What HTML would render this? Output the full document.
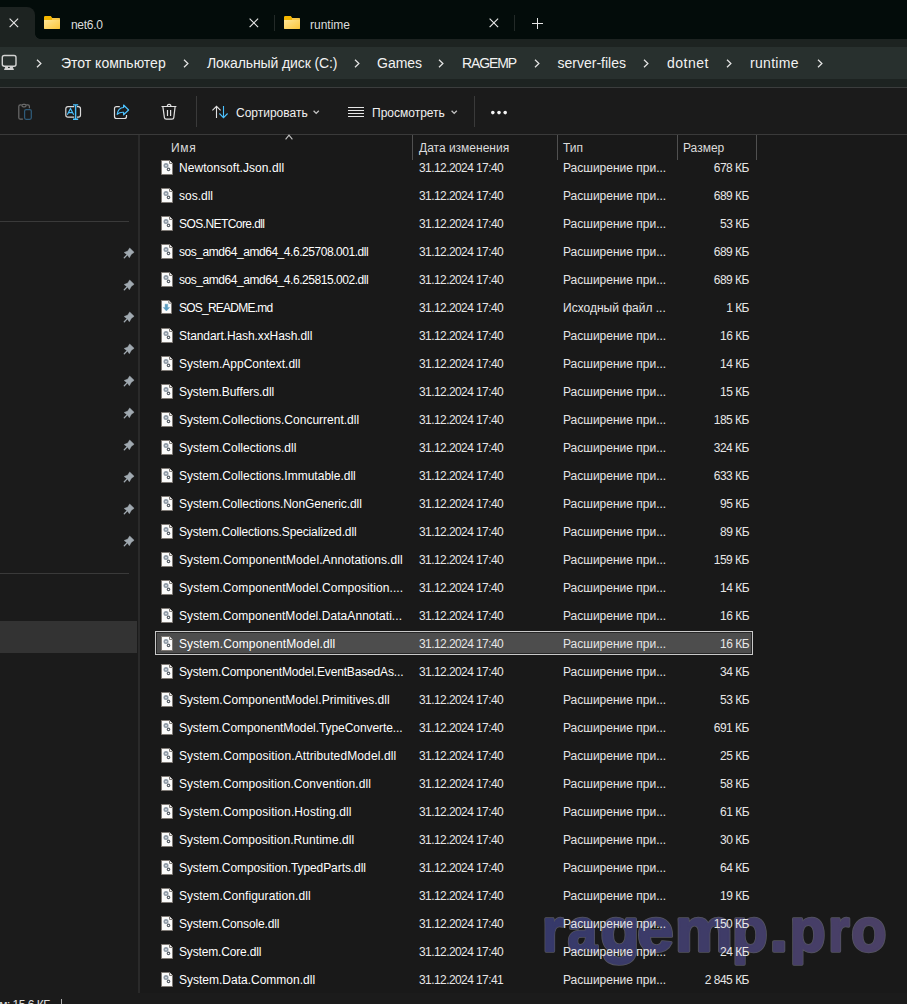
<!DOCTYPE html>
<html><head><meta charset="utf-8">
<style>
*{box-sizing:border-box}
html,body{margin:0;padding:0}
body{width:907px;height:1004px;overflow:hidden;position:relative;background:#191919;font-family:"Liberation Sans",sans-serif;color:#fff}
.a{position:absolute}
#tabbar{left:0;top:0;width:907px;height:39px;background:#030c0a}
#acttab{left:-20px;top:7px;width:55px;height:40px;background:#1d2321;border-radius:0 8px 0 0}
#flare{left:35px;top:34px;width:5px;height:5px;background:radial-gradient(circle at 100% 0,#030c0a 4.5px,#1d2321 5px)}
#strip1{left:0;top:39px;width:907px;height:8px;background:#1d2321}
#addr{left:0;top:47px;width:907px;height:32px;background:#28302e}
#strip2{left:0;top:79px;width:907px;height:8px;background:#1d2321}
#line1{left:0;top:87px;width:907px;height:1px;background:#3b3d3d}
#toolbar{left:0;top:88px;width:907px;height:46px;background:#1b1b1b}
#line2{left:0;top:134px;width:907px;height:1px;background:#3a3a3a}
#nav{left:0;top:135px;width:138px;height:858px;background:#1b1b1b}
#divider{left:138px;top:135px;width:2px;height:858px;background:#2a2a2a}
#status{left:0;top:993px;width:907px;height:11px;background:#1b1b1b}
.tabtxt{font-size:12px;color:#dcdcdc;top:16.5px;line-height:16px}
.x{stroke:#e6e6e6;stroke-width:1.15}
.crumb{font-size:14px;color:#f2f2f2;top:55px;line-height:16px;white-space:nowrap}
.tb{font-size:12px;color:#f0f0f0;top:105px;line-height:16px;white-space:nowrap}
.hdr{font-size:12px;color:#dcdcdc;top:141px;line-height:14px;white-space:nowrap}
.colsep{top:135px;width:1px;height:25px;background:#505050}
.row{position:absolute;left:155px;width:598px;height:28px}
.row .ic{position:absolute;left:6px;top:7px}
.row span{position:absolute;top:8px;font-size:12px;line-height:14px;white-space:nowrap;color:#ffffff}
.row .nm{left:24px}
.row .dt{left:264px;color:#e6e6e6;letter-spacing:-0.58px}
.row .tp{left:408px;color:#e6e6e6}
.row .sz{right:4px;color:#e6e6e6;letter-spacing:-0.5px}
.row.sel::before{content:"";box-sizing:border-box;position:absolute;left:0;top:2px;width:598px;height:24px;border:1px solid #c9c9c9;background:#4d4d4d;box-shadow:inset 0 0 0 1px #262626}
.pin{left:123px;width:12px;height:12px}
.navsep{left:0;width:129px;height:1px;background:#3a3a3a}
</style></head><body>
<svg width="0" height="0" style="position:absolute"><defs><linearGradient id="fg" x1="0" y1="0" x2="1" y2="1"><stop offset="0" stop-color="#ffe697"/><stop offset="1" stop-color="#fcc63a"/></linearGradient></defs></svg>
<div id="tabbar" class="a"></div>
<div id="acttab" class="a"></div>
<div id="flare" class="a"></div>
<svg class="a" style="left:9px;top:18px" width="10" height="10" viewBox="0 0 10 10"><path class="x" d="M0.6 0.6L9.1 9.1M9.1 0.6L0.6 9.1"/></svg>
<!-- tab net6.0 -->
<svg class="a" style="left:44px;top:16px" width="16" height="13" viewBox="0 0 16 13"><path d="M0 1.3Q0 0 1.3 0H6.8L8.3 2H14.7Q16 2 16 3.3V12Q16 13 15 13H1Q0 13 0 12Z" fill="#f3b600"/><path d="M8 2H14.7Q16 2 16 3.3V4H8Z" fill="#f8c848"/><path d="M0 4H16V12Q16 13 15 13H1Q0 13 0 12Z" fill="url(#fg)"/></svg>
<div class="a tabtxt" style="left:71px;letter-spacing:-0.3px">net6.0</div>
<svg class="a" style="left:249px;top:18px" width="10" height="10" viewBox="0 0 10 10"><path class="x" d="M0.6 0.6L9.1 9.1M9.1 0.6L0.6 9.1"/></svg>
<div class="a" style="left:274px;top:15px;width:1px;height:16px;background:#232a28"></div>
<!-- tab runtime -->
<svg class="a" style="left:284px;top:16px" width="16" height="13" viewBox="0 0 16 13"><path d="M0 1.3Q0 0 1.3 0H6.8L8.3 2H14.7Q16 2 16 3.3V12Q16 13 15 13H1Q0 13 0 12Z" fill="#f3b600"/><path d="M8 2H14.7Q16 2 16 3.3V4H8Z" fill="#f8c848"/><path d="M0 4H16V12Q16 13 15 13H1Q0 13 0 12Z" fill="url(#fg)"/></svg>
<div class="a tabtxt" style="left:310px">runtime</div>
<svg class="a" style="left:489px;top:18px" width="10" height="10" viewBox="0 0 10 10"><path class="x" d="M0.6 0.6L9.1 9.1M9.1 0.6L0.6 9.1"/></svg>
<div class="a" style="left:514px;top:15px;width:1px;height:16px;background:#232a28"></div>
<svg class="a" style="left:532px;top:18px" width="11" height="11" viewBox="0 0 11 11"><path d="M5.5 0V11M0 5.5H11" stroke="#e6e6e6" stroke-width="1"/></svg>

<div id="strip1" class="a"></div>
<div id="addr" class="a"></div>
<div id="strip2" class="a"></div>
<div id="line1" class="a"></div>
<!-- monitor icon -->
<svg class="a" style="left:0;top:50px" width="24" height="24" viewBox="0 0 24 24"><rect x="2.3" y="5.5" width="13.7" height="10.7" rx="2" fill="none" stroke="#d2d2d2" stroke-width="1.4"/><path d="M5.3 16.8H12.7L14 19.9H4Z" fill="#d2d2d2"/><rect x="8" y="16.9" width="1.8" height="1.1" fill="#28302e"/></svg>
<svg class="a" style="left:36px;top:58.6px" width="7" height="10" viewBox="0 0 7 10"><path d="M1 0.8L4.9 4.5L1 8.2" fill="none" stroke="#e4e4e4" stroke-width="1.25"/></svg>
<div class="a crumb" style="left:61px">Этот компьютер</div>
<svg class="a" style="left:183px;top:58.6px" width="7" height="10" viewBox="0 0 7 10"><path d="M1 0.8L4.9 4.5L1 8.2" fill="none" stroke="#e4e4e4" stroke-width="1.25"/></svg>
<div class="a crumb" style="left:207px;letter-spacing:-0.11px">Локальный диск (C:)</div>
<svg class="a" style="left:353.5px;top:58.6px" width="7" height="10" viewBox="0 0 7 10"><path d="M1 0.8L4.9 4.5L1 8.2" fill="none" stroke="#e4e4e4" stroke-width="1.25"/></svg>
<div class="a crumb" style="left:377px">Games</div>
<svg class="a" style="left:438px;top:58.6px" width="7" height="10" viewBox="0 0 7 10"><path d="M1 0.8L4.9 4.5L1 8.2" fill="none" stroke="#e4e4e4" stroke-width="1.25"/></svg>
<div class="a crumb" style="left:462px;letter-spacing:-1.1px">RAGEMP</div>
<svg class="a" style="left:533.7px;top:58.6px" width="7" height="10" viewBox="0 0 7 10"><path d="M1 0.8L4.9 4.5L1 8.2" fill="none" stroke="#e4e4e4" stroke-width="1.25"/></svg>
<div class="a crumb" style="left:557.5px">server-files</div>
<svg class="a" style="left:643.3px;top:58.6px" width="7" height="10" viewBox="0 0 7 10"><path d="M1 0.8L4.9 4.5L1 8.2" fill="none" stroke="#e4e4e4" stroke-width="1.25"/></svg>
<div class="a crumb" style="left:667px;letter-spacing:0.5px">dotnet</div>
<svg class="a" style="left:725.7px;top:58.6px" width="7" height="10" viewBox="0 0 7 10"><path d="M1 0.8L4.9 4.5L1 8.2" fill="none" stroke="#e4e4e4" stroke-width="1.25"/></svg>
<div class="a crumb" style="left:750px;letter-spacing:0.3px">runtime</div>
<svg class="a" style="left:816.8px;top:58.6px" width="7" height="10" viewBox="0 0 7 10"><path d="M1 0.8L4.9 4.5L1 8.2" fill="none" stroke="#e4e4e4" stroke-width="1.25"/></svg>

<div id="toolbar" class="a"></div>
<div id="line2" class="a"></div>

<svg class="a" style="left:12px;top:100px" width="26" height="24" viewBox="0 0 26 24"><path d="M10.9 19.2H8.3Q6.8 19.2 6.8 17.7V6.4Q6.8 4.9 8.3 4.9H9.6M14.3 4.9H15.9Q17.4 4.9 17.4 6.4V8.2" fill="none" stroke="#6b6b6b" stroke-width="1.2"/><rect x="9.9" y="4.4" width="4.2" height="2.4" rx="1.2" fill="none" stroke="#6b6b6b" stroke-width="1.2"/><rect x="12.6" y="9.6" width="6.7" height="9.7" rx="1.5" fill="none" stroke="#2f5b79" stroke-width="1.25"/></svg>
<svg class="a" style="left:60px;top:100px" width="26" height="24" viewBox="0 0 26 24"><path d="M14.2 6.6H8Q5.8 6.6 5.8 8.8V15Q5.8 17.2 8 17.2H14.2M16.9 6.6H18.3Q20.5 6.6 20.5 8.8V15Q20.5 17.2 18.3 17.2H16.9" fill="none" stroke="#dadada" stroke-width="1.2"/><path d="M15.6 4.8V19.3M13 4.9H18.2M13 19.2H18.2" fill="none" stroke="#4cc2ff" stroke-width="1.4"/><path d="M7.3 14.7L10.5 8.4L13.7 14.7M8.5 12.6H12.5" fill="none" stroke="#4cc2ff" stroke-width="1.15"/></svg>
<svg class="a" style="left:108px;top:98px" width="26" height="26" viewBox="0 0 26 26"><path d="M11.8 8.6H8.5Q6.5 8.6 6.5 10.6V18.5Q6.5 20.5 8.5 20.5H16.5Q18.5 20.5 18.5 18.5V17" fill="none" stroke="#dedede" stroke-width="1.2"/><path d="M9.2 16.4Q10 9.8 15.6 9.5V7L20.6 12L15.6 16.8V14.3Q11.6 14 9.2 16.4Z" fill="none" stroke="#4cc2ff" stroke-width="1.2" stroke-linejoin="round"/></svg>
<svg class="a" style="left:156px;top:98px" width="26" height="26" viewBox="0 0 26 26"><path d="M5.5 8.5H20.4M11.3 8.3Q11.3 6.3 13.1 6.3Q14.9 6.3 14.9 8.3M6.9 8.8L8.4 19.6Q8.6 21.2 10.2 21.2H16Q17.6 21.2 17.8 19.6L19.1 8.8M11.5 12V18M14.6 12V18" fill="none" stroke="#e2e2e2" stroke-width="1.2"/></svg>
<div class="a" style="left:196px;top:96px;width:1px;height:31px;background:#3a3a3a"></div>
<svg class="a" style="left:206px;top:100px" width="26" height="24" viewBox="0 0 26 24"><path d="M10.5 18V6.3M6.4 10.4L10.5 6.3L14.6 10.4" fill="none" stroke="#e2e2e2" stroke-width="1.1"/><path d="M17.5 6V17.6M13.4 13.5L17.5 17.6L21.6 13.5" fill="none" stroke="#4cc2ff" stroke-width="1.1"/></svg>
<div class="a tb" style="left:236px">Сортировать</div>
<svg class="a" style="left:313px;top:110px" width="7" height="5" viewBox="0 0 7 5"><path d="M0.6 0.7L3.2 3.4L5.8 0.7" fill="none" stroke="#c4c4c4" stroke-width="1.3"/></svg>
<svg class="a" style="left:348px;top:107px" width="16" height="10" viewBox="0 0 16 10"><path d="M0 0.5H16M0 3.5H16M0 6.5H16M0 9.5H16" fill="none" stroke="#e6e6e6" stroke-width="1"/></svg>
<div class="a tb" style="left:372px">Просмотреть</div>
<svg class="a" style="left:451px;top:110px" width="7" height="5" viewBox="0 0 7 5"><path d="M0.6 0.7L3.2 3.4L5.8 0.7" fill="none" stroke="#c4c4c4" stroke-width="1.3"/></svg>
<div class="a" style="left:474px;top:96px;width:1px;height:31px;background:#3a3a3a"></div>
<svg class="a" style="left:490px;top:110px" width="18" height="5" viewBox="0 0 18 5"><circle cx="2.8" cy="2.6" r="1.8" fill="#f4f4f4"/><circle cx="9" cy="2.6" r="1.8" fill="#f4f4f4"/><circle cx="15.2" cy="2.6" r="1.8" fill="#f4f4f4"/></svg>


<div id="nav" class="a"></div>
<div id="divider" class="a"></div>
<div class="a navsep" style="top:221px"></div>
<div class="a navsep" style="top:573px"></div>
<div class="a" style="left:0;top:621px;width:137px;height:32px;background:#333"></div>
<svg class="a pin" style="top:247px" width="12" height="12" viewBox="0 0 12 12"><path d="M6.7 1L11.1 5.3L8.4 7.2L6.3 10.7L4.7 8.2L1.2 5.5L4.8 4.1Z" fill="#a0a9b0" stroke="#a0a9b0" stroke-width="0.5" stroke-linejoin="round"/><path d="M4.6 7.4L1.3 10.8" stroke="#a0a9b0" stroke-width="1.3" stroke-linecap="round"/></svg>
<svg class="a pin" style="top:279px" width="12" height="12" viewBox="0 0 12 12"><path d="M6.7 1L11.1 5.3L8.4 7.2L6.3 10.7L4.7 8.2L1.2 5.5L4.8 4.1Z" fill="#a0a9b0" stroke="#a0a9b0" stroke-width="0.5" stroke-linejoin="round"/><path d="M4.6 7.4L1.3 10.8" stroke="#a0a9b0" stroke-width="1.3" stroke-linecap="round"/></svg>
<svg class="a pin" style="top:311px" width="12" height="12" viewBox="0 0 12 12"><path d="M6.7 1L11.1 5.3L8.4 7.2L6.3 10.7L4.7 8.2L1.2 5.5L4.8 4.1Z" fill="#a0a9b0" stroke="#a0a9b0" stroke-width="0.5" stroke-linejoin="round"/><path d="M4.6 7.4L1.3 10.8" stroke="#a0a9b0" stroke-width="1.3" stroke-linecap="round"/></svg>
<svg class="a pin" style="top:343px" width="12" height="12" viewBox="0 0 12 12"><path d="M6.7 1L11.1 5.3L8.4 7.2L6.3 10.7L4.7 8.2L1.2 5.5L4.8 4.1Z" fill="#a0a9b0" stroke="#a0a9b0" stroke-width="0.5" stroke-linejoin="round"/><path d="M4.6 7.4L1.3 10.8" stroke="#a0a9b0" stroke-width="1.3" stroke-linecap="round"/></svg>
<svg class="a pin" style="top:375px" width="12" height="12" viewBox="0 0 12 12"><path d="M6.7 1L11.1 5.3L8.4 7.2L6.3 10.7L4.7 8.2L1.2 5.5L4.8 4.1Z" fill="#a0a9b0" stroke="#a0a9b0" stroke-width="0.5" stroke-linejoin="round"/><path d="M4.6 7.4L1.3 10.8" stroke="#a0a9b0" stroke-width="1.3" stroke-linecap="round"/></svg>
<svg class="a pin" style="top:407px" width="12" height="12" viewBox="0 0 12 12"><path d="M6.7 1L11.1 5.3L8.4 7.2L6.3 10.7L4.7 8.2L1.2 5.5L4.8 4.1Z" fill="#a0a9b0" stroke="#a0a9b0" stroke-width="0.5" stroke-linejoin="round"/><path d="M4.6 7.4L1.3 10.8" stroke="#a0a9b0" stroke-width="1.3" stroke-linecap="round"/></svg>
<svg class="a pin" style="top:439px" width="12" height="12" viewBox="0 0 12 12"><path d="M6.7 1L11.1 5.3L8.4 7.2L6.3 10.7L4.7 8.2L1.2 5.5L4.8 4.1Z" fill="#a0a9b0" stroke="#a0a9b0" stroke-width="0.5" stroke-linejoin="round"/><path d="M4.6 7.4L1.3 10.8" stroke="#a0a9b0" stroke-width="1.3" stroke-linecap="round"/></svg>
<svg class="a pin" style="top:471px" width="12" height="12" viewBox="0 0 12 12"><path d="M6.7 1L11.1 5.3L8.4 7.2L6.3 10.7L4.7 8.2L1.2 5.5L4.8 4.1Z" fill="#a0a9b0" stroke="#a0a9b0" stroke-width="0.5" stroke-linejoin="round"/><path d="M4.6 7.4L1.3 10.8" stroke="#a0a9b0" stroke-width="1.3" stroke-linecap="round"/></svg>
<svg class="a pin" style="top:503px" width="12" height="12" viewBox="0 0 12 12"><path d="M6.7 1L11.1 5.3L8.4 7.2L6.3 10.7L4.7 8.2L1.2 5.5L4.8 4.1Z" fill="#a0a9b0" stroke="#a0a9b0" stroke-width="0.5" stroke-linejoin="round"/><path d="M4.6 7.4L1.3 10.8" stroke="#a0a9b0" stroke-width="1.3" stroke-linecap="round"/></svg>
<svg class="a pin" style="top:535px" width="12" height="12" viewBox="0 0 12 12"><path d="M6.7 1L11.1 5.3L8.4 7.2L6.3 10.7L4.7 8.2L1.2 5.5L4.8 4.1Z" fill="#a0a9b0" stroke="#a0a9b0" stroke-width="0.5" stroke-linejoin="round"/><path d="M4.6 7.4L1.3 10.8" stroke="#a0a9b0" stroke-width="1.3" stroke-linecap="round"/></svg>

<!-- header -->
<div class="a hdr" style="left:171px;letter-spacing:0.7px">Имя</div>
<svg class="a" style="left:284.5px;top:134px" width="9" height="6" viewBox="0 0 9 6"><path d="M0.6 5.4L4 1.2L7.4 5.4" fill="none" stroke="#c4c4c4" stroke-width="1.1"/></svg>
<div class="a colsep" style="left:412px"></div>
<div class="a hdr" style="left:419px">Дата изменения</div>
<div class="a colsep" style="left:557px"></div>
<div class="a hdr" style="left:563px">Тип</div>
<div class="a colsep" style="left:677px"></div>
<div class="a hdr" style="left:683px">Размер</div>
<div class="a colsep" style="left:756px"></div>

<svg id="wmsvg" class="a" style="left:0;top:0" width="907" height="1004"><defs><linearGradient id="wg" gradientUnits="userSpaceOnUse" x1="540" x2="890" y1="0" y2="0"><stop offset="0" stop-color="#363a6a"/><stop offset="1" stop-color="#463d66"/></linearGradient></defs><g font-family="Liberation Sans" font-weight="bold" font-size="61" fill="none" stroke="#55555f" stroke-width="3.4" stroke-linejoin="round"><text x="0" y="951.3" transform="matrix(0.8992 0 0 1 542.28 0)">r</text><text x="0" y="951.3" transform="matrix(0.8639 0 0 1 567.66 0)">a</text><text x="0" y="951.3" transform="matrix(1.0463 0 0 1 600.58 0)">g</text><text x="0" y="951.3" transform="matrix(1.0693 0 0 1 637.15 0)">e</text><text x="0" y="951.3" transform="matrix(1.0639 0 0 1 675.12 0)">m</text><text x="0" y="951.3" transform="matrix(0.9565 0 0 1 731.95 0)">p</text><text x="0" y="951.3" transform="matrix(1.0920 0 0 1 769.48 0)">.</text><text x="0" y="951.3" transform="matrix(0.9597 0 0 1 789.74 0)">p</text><text x="0" y="951.3" transform="matrix(0.8992 0 0 1 828.18 0)">r</text><text x="0" y="951.3" transform="matrix(0.9417 0 0 1 851.16 0)">o</text></g><g font-family="Liberation Sans" font-weight="bold" font-size="61" stroke-width="1.8" stroke-linejoin="round"><text x="0" y="951.3" transform="matrix(0.8992 0 0 1 542.28 0)" fill="#36396a" stroke="#36396a">r</text><text x="0" y="951.3" transform="matrix(0.8639 0 0 1 567.66 0)" fill="#383a6a" stroke="#383a6a">a</text><text x="0" y="951.3" transform="matrix(1.0463 0 0 1 600.58 0)" fill="#3a3b69" stroke="#3a3b69">g</text><text x="0" y="951.3" transform="matrix(1.0693 0 0 1 637.15 0)" fill="#3c3b69" stroke="#3c3b69">e</text><text x="0" y="951.3" transform="matrix(1.0639 0 0 1 675.12 0)" fill="#3f3c68" stroke="#3f3c68">m</text><text x="0" y="951.3" transform="matrix(0.9565 0 0 1 731.95 0)" fill="#423d68" stroke="#423d68">p</text><text x="0" y="951.3" transform="matrix(1.0920 0 0 1 769.48 0)" fill="#443e67" stroke="#443e67">.</text><text x="0" y="951.3" transform="matrix(0.9597 0 0 1 789.74 0)" fill="#463e67" stroke="#463e67">p</text><text x="0" y="951.3" transform="matrix(0.8992 0 0 1 828.18 0)" fill="#483f67" stroke="#483f67">r</text><text x="0" y="951.3" transform="matrix(0.9417 0 0 1 851.16 0)" fill="#4a4066" stroke="#4a4066">o</text></g></svg>
<div class="row" style="top:153px"><svg class="ic" width="12" height="15" viewBox="0 0 12 15"><path d="M0.5 0.5H8.5L11.5 3.5V14.5H0.5Z" fill="#fbfbfb" stroke="#807b76" stroke-width="1"/><path d="M8.5 0.5V3.5H11.5" fill="#f4f4f4" stroke="#807b76" stroke-width="1"/><circle cx="5" cy="5.6" r="2.5" fill="#8f9aa6"/><circle cx="5" cy="5.6" r="0.9" fill="#e4e8ec"/><circle cx="7.5" cy="9.4" r="1.8" fill="#5a6169"/><circle cx="7.5" cy="9.4" r="0.7" fill="#ffffff"/></svg><span class="nm" style="letter-spacing:0.056px">Newtonsoft.Json.dll</span><span class="dt">31.12.2024 17:40</span><span class="tp">Расширение при...</span><span class="sz">678 КБ</span></div>
<div class="row" style="top:181px"><svg class="ic" width="12" height="15" viewBox="0 0 12 15"><path d="M0.5 0.5H8.5L11.5 3.5V14.5H0.5Z" fill="#fbfbfb" stroke="#807b76" stroke-width="1"/><path d="M8.5 0.5V3.5H11.5" fill="#f4f4f4" stroke="#807b76" stroke-width="1"/><circle cx="5" cy="5.6" r="2.5" fill="#8f9aa6"/><circle cx="5" cy="5.6" r="0.9" fill="#e4e8ec"/><circle cx="7.5" cy="9.4" r="1.8" fill="#5a6169"/><circle cx="7.5" cy="9.4" r="0.7" fill="#ffffff"/></svg><span class="nm">sos.dll</span><span class="dt">31.12.2024 17:40</span><span class="tp">Расширение при...</span><span class="sz">689 КБ</span></div>
<div class="row" style="top:209px"><svg class="ic" width="12" height="15" viewBox="0 0 12 15"><path d="M0.5 0.5H8.5L11.5 3.5V14.5H0.5Z" fill="#fbfbfb" stroke="#807b76" stroke-width="1"/><path d="M8.5 0.5V3.5H11.5" fill="#f4f4f4" stroke="#807b76" stroke-width="1"/><circle cx="5" cy="5.6" r="2.5" fill="#8f9aa6"/><circle cx="5" cy="5.6" r="0.9" fill="#e4e8ec"/><circle cx="7.5" cy="9.4" r="1.8" fill="#5a6169"/><circle cx="7.5" cy="9.4" r="0.7" fill="#ffffff"/></svg><span class="nm" style="letter-spacing:-0.571px">SOS.NETCore.dll</span><span class="dt">31.12.2024 17:40</span><span class="tp">Расширение при...</span><span class="sz">53 КБ</span></div>
<div class="row" style="top:237px"><svg class="ic" width="12" height="15" viewBox="0 0 12 15"><path d="M0.5 0.5H8.5L11.5 3.5V14.5H0.5Z" fill="#fbfbfb" stroke="#807b76" stroke-width="1"/><path d="M8.5 0.5V3.5H11.5" fill="#f4f4f4" stroke="#807b76" stroke-width="1"/><circle cx="5" cy="5.6" r="2.5" fill="#8f9aa6"/><circle cx="5" cy="5.6" r="0.9" fill="#e4e8ec"/><circle cx="7.5" cy="9.4" r="1.8" fill="#5a6169"/><circle cx="7.5" cy="9.4" r="0.7" fill="#ffffff"/></svg><span class="nm" style="letter-spacing:-0.453px">sos_amd64_amd64_4.6.25708.001.dll</span><span class="dt">31.12.2024 17:40</span><span class="tp">Расширение при...</span><span class="sz">689 КБ</span></div>
<div class="row" style="top:265px"><svg class="ic" width="12" height="15" viewBox="0 0 12 15"><path d="M0.5 0.5H8.5L11.5 3.5V14.5H0.5Z" fill="#fbfbfb" stroke="#807b76" stroke-width="1"/><path d="M8.5 0.5V3.5H11.5" fill="#f4f4f4" stroke="#807b76" stroke-width="1"/><circle cx="5" cy="5.6" r="2.5" fill="#8f9aa6"/><circle cx="5" cy="5.6" r="0.9" fill="#e4e8ec"/><circle cx="7.5" cy="9.4" r="1.8" fill="#5a6169"/><circle cx="7.5" cy="9.4" r="0.7" fill="#ffffff"/></svg><span class="nm" style="letter-spacing:-0.453px">sos_amd64_amd64_4.6.25815.002.dll</span><span class="dt">31.12.2024 17:40</span><span class="tp">Расширение при...</span><span class="sz">689 КБ</span></div>
<div class="row" style="top:293px"><svg class="ic" width="11" height="14" viewBox="0 0 11 14"><path d="M0.5 0.5H7.8L10.5 3.2V13.5H0.5Z" fill="#fbfbfb" stroke="#807b76" stroke-width="1"/><path d="M7.8 0.5V3.2H10.5" fill="#f4f4f4" stroke="#807b76" stroke-width="1"/><path d="M4 4.2H6.8L6.6 7.4H8.6L5.4 11L2.2 7.4H4.2Z" fill="#5a9cc0" stroke="#5a9cc0" stroke-width="0.4" stroke-linejoin="round"/></svg><span class="nm" style="letter-spacing:-0.767px">SOS_README.md</span><span class="dt">31.12.2024 17:40</span><span class="tp">Исходный файл ...</span><span class="sz">1 КБ</span></div>
<div class="row" style="top:321px"><svg class="ic" width="12" height="15" viewBox="0 0 12 15"><path d="M0.5 0.5H8.5L11.5 3.5V14.5H0.5Z" fill="#fbfbfb" stroke="#807b76" stroke-width="1"/><path d="M8.5 0.5V3.5H11.5" fill="#f4f4f4" stroke="#807b76" stroke-width="1"/><circle cx="5" cy="5.6" r="2.5" fill="#8f9aa6"/><circle cx="5" cy="5.6" r="0.9" fill="#e4e8ec"/><circle cx="7.5" cy="9.4" r="1.8" fill="#5a6169"/><circle cx="7.5" cy="9.4" r="0.7" fill="#ffffff"/></svg><span class="nm" style="letter-spacing:-0.091px">Standart.Hash.xxHash.dll</span><span class="dt">31.12.2024 17:40</span><span class="tp">Расширение при...</span><span class="sz">16 КБ</span></div>
<div class="row" style="top:349px"><svg class="ic" width="12" height="15" viewBox="0 0 12 15"><path d="M0.5 0.5H8.5L11.5 3.5V14.5H0.5Z" fill="#fbfbfb" stroke="#807b76" stroke-width="1"/><path d="M8.5 0.5V3.5H11.5" fill="#f4f4f4" stroke="#807b76" stroke-width="1"/><circle cx="5" cy="5.6" r="2.5" fill="#8f9aa6"/><circle cx="5" cy="5.6" r="0.9" fill="#e4e8ec"/><circle cx="7.5" cy="9.4" r="1.8" fill="#5a6169"/><circle cx="7.5" cy="9.4" r="0.7" fill="#ffffff"/></svg><span class="nm">System.AppContext.dll</span><span class="dt">31.12.2024 17:40</span><span class="tp">Расширение при...</span><span class="sz">14 КБ</span></div>
<div class="row" style="top:377px"><svg class="ic" width="12" height="15" viewBox="0 0 12 15"><path d="M0.5 0.5H8.5L11.5 3.5V14.5H0.5Z" fill="#fbfbfb" stroke="#807b76" stroke-width="1"/><path d="M8.5 0.5V3.5H11.5" fill="#f4f4f4" stroke="#807b76" stroke-width="1"/><circle cx="5" cy="5.6" r="2.5" fill="#8f9aa6"/><circle cx="5" cy="5.6" r="0.9" fill="#e4e8ec"/><circle cx="7.5" cy="9.4" r="1.8" fill="#5a6169"/><circle cx="7.5" cy="9.4" r="0.7" fill="#ffffff"/></svg><span class="nm" style="letter-spacing:-0.076px">System.Buffers.dll</span><span class="dt">31.12.2024 17:40</span><span class="tp">Расширение при...</span><span class="sz">15 КБ</span></div>
<div class="row" style="top:405px"><svg class="ic" width="12" height="15" viewBox="0 0 12 15"><path d="M0.5 0.5H8.5L11.5 3.5V14.5H0.5Z" fill="#fbfbfb" stroke="#807b76" stroke-width="1"/><path d="M8.5 0.5V3.5H11.5" fill="#f4f4f4" stroke="#807b76" stroke-width="1"/><circle cx="5" cy="5.6" r="2.5" fill="#8f9aa6"/><circle cx="5" cy="5.6" r="0.9" fill="#e4e8ec"/><circle cx="7.5" cy="9.4" r="1.8" fill="#5a6169"/><circle cx="7.5" cy="9.4" r="0.7" fill="#ffffff"/></svg><span class="nm">System.Collections.Concurrent.dll</span><span class="dt">31.12.2024 17:40</span><span class="tp">Расширение при...</span><span class="sz">185 КБ</span></div>
<div class="row" style="top:433px"><svg class="ic" width="12" height="15" viewBox="0 0 12 15"><path d="M0.5 0.5H8.5L11.5 3.5V14.5H0.5Z" fill="#fbfbfb" stroke="#807b76" stroke-width="1"/><path d="M8.5 0.5V3.5H11.5" fill="#f4f4f4" stroke="#807b76" stroke-width="1"/><circle cx="5" cy="5.6" r="2.5" fill="#8f9aa6"/><circle cx="5" cy="5.6" r="0.9" fill="#e4e8ec"/><circle cx="7.5" cy="9.4" r="1.8" fill="#5a6169"/><circle cx="7.5" cy="9.4" r="0.7" fill="#ffffff"/></svg><span class="nm">System.Collections.dll</span><span class="dt">31.12.2024 17:40</span><span class="tp">Расширение при...</span><span class="sz">324 КБ</span></div>
<div class="row" style="top:461px"><svg class="ic" width="12" height="15" viewBox="0 0 12 15"><path d="M0.5 0.5H8.5L11.5 3.5V14.5H0.5Z" fill="#fbfbfb" stroke="#807b76" stroke-width="1"/><path d="M8.5 0.5V3.5H11.5" fill="#f4f4f4" stroke="#807b76" stroke-width="1"/><circle cx="5" cy="5.6" r="2.5" fill="#8f9aa6"/><circle cx="5" cy="5.6" r="0.9" fill="#e4e8ec"/><circle cx="7.5" cy="9.4" r="1.8" fill="#5a6169"/><circle cx="7.5" cy="9.4" r="0.7" fill="#ffffff"/></svg><span class="nm">System.Collections.Immutable.dll</span><span class="dt">31.12.2024 17:40</span><span class="tp">Расширение при...</span><span class="sz">633 КБ</span></div>
<div class="row" style="top:489px"><svg class="ic" width="12" height="15" viewBox="0 0 12 15"><path d="M0.5 0.5H8.5L11.5 3.5V14.5H0.5Z" fill="#fbfbfb" stroke="#807b76" stroke-width="1"/><path d="M8.5 0.5V3.5H11.5" fill="#f4f4f4" stroke="#807b76" stroke-width="1"/><circle cx="5" cy="5.6" r="2.5" fill="#8f9aa6"/><circle cx="5" cy="5.6" r="0.9" fill="#e4e8ec"/><circle cx="7.5" cy="9.4" r="1.8" fill="#5a6169"/><circle cx="7.5" cy="9.4" r="0.7" fill="#ffffff"/></svg><span class="nm" style="letter-spacing:-0.059px">System.Collections.NonGeneric.dll</span><span class="dt">31.12.2024 17:40</span><span class="tp">Расширение при...</span><span class="sz">95 КБ</span></div>
<div class="row" style="top:517px"><svg class="ic" width="12" height="15" viewBox="0 0 12 15"><path d="M0.5 0.5H8.5L11.5 3.5V14.5H0.5Z" fill="#fbfbfb" stroke="#807b76" stroke-width="1"/><path d="M8.5 0.5V3.5H11.5" fill="#f4f4f4" stroke="#807b76" stroke-width="1"/><circle cx="5" cy="5.6" r="2.5" fill="#8f9aa6"/><circle cx="5" cy="5.6" r="0.9" fill="#e4e8ec"/><circle cx="7.5" cy="9.4" r="1.8" fill="#5a6169"/><circle cx="7.5" cy="9.4" r="0.7" fill="#ffffff"/></svg><span class="nm" style="letter-spacing:-0.136px">System.Collections.Specialized.dll</span><span class="dt">31.12.2024 17:40</span><span class="tp">Расширение при...</span><span class="sz">89 КБ</span></div>
<div class="row" style="top:545px"><svg class="ic" width="12" height="15" viewBox="0 0 12 15"><path d="M0.5 0.5H8.5L11.5 3.5V14.5H0.5Z" fill="#fbfbfb" stroke="#807b76" stroke-width="1"/><path d="M8.5 0.5V3.5H11.5" fill="#f4f4f4" stroke="#807b76" stroke-width="1"/><circle cx="5" cy="5.6" r="2.5" fill="#8f9aa6"/><circle cx="5" cy="5.6" r="0.9" fill="#e4e8ec"/><circle cx="7.5" cy="9.4" r="1.8" fill="#5a6169"/><circle cx="7.5" cy="9.4" r="0.7" fill="#ffffff"/></svg><span class="nm" style="letter-spacing:0.1px">System.ComponentModel.Annotations.dll</span><span class="dt">31.12.2024 17:40</span><span class="tp">Расширение при...</span><span class="sz">159 КБ</span></div>
<div class="row" style="top:573px"><svg class="ic" width="12" height="15" viewBox="0 0 12 15"><path d="M0.5 0.5H8.5L11.5 3.5V14.5H0.5Z" fill="#fbfbfb" stroke="#807b76" stroke-width="1"/><path d="M8.5 0.5V3.5H11.5" fill="#f4f4f4" stroke="#807b76" stroke-width="1"/><circle cx="5" cy="5.6" r="2.5" fill="#8f9aa6"/><circle cx="5" cy="5.6" r="0.9" fill="#e4e8ec"/><circle cx="7.5" cy="9.4" r="1.8" fill="#5a6169"/><circle cx="7.5" cy="9.4" r="0.7" fill="#ffffff"/></svg><span class="nm" style="letter-spacing:0.072px">System.ComponentModel.Composition....</span><span class="dt">31.12.2024 17:40</span><span class="tp">Расширение при...</span><span class="sz">14 КБ</span></div>
<div class="row" style="top:601px"><svg class="ic" width="12" height="15" viewBox="0 0 12 15"><path d="M0.5 0.5H8.5L11.5 3.5V14.5H0.5Z" fill="#fbfbfb" stroke="#807b76" stroke-width="1"/><path d="M8.5 0.5V3.5H11.5" fill="#f4f4f4" stroke="#807b76" stroke-width="1"/><circle cx="5" cy="5.6" r="2.5" fill="#8f9aa6"/><circle cx="5" cy="5.6" r="0.9" fill="#e4e8ec"/><circle cx="7.5" cy="9.4" r="1.8" fill="#5a6169"/><circle cx="7.5" cy="9.4" r="0.7" fill="#ffffff"/></svg><span class="nm" style="letter-spacing:0.061px">System.ComponentModel.DataAnnotati...</span><span class="dt">31.12.2024 17:40</span><span class="tp">Расширение при...</span><span class="sz">16 КБ</span></div>
<div class="row sel" style="top:629px"><svg class="ic" width="12" height="15" viewBox="0 0 12 15"><path d="M0.5 0.5H8.5L11.5 3.5V14.5H0.5Z" fill="#fbfbfb" stroke="#807b76" stroke-width="1"/><path d="M8.5 0.5V3.5H11.5" fill="#f4f4f4" stroke="#807b76" stroke-width="1"/><circle cx="5" cy="5.6" r="2.5" fill="#8f9aa6"/><circle cx="5" cy="5.6" r="0.9" fill="#e4e8ec"/><circle cx="7.5" cy="9.4" r="1.8" fill="#5a6169"/><circle cx="7.5" cy="9.4" r="0.7" fill="#ffffff"/></svg><span class="nm" style="letter-spacing:0.117px">System.ComponentModel.dll</span><span class="dt">31.12.2024 17:40</span><span class="tp">Расширение при...</span><span class="sz">16 КБ</span></div>
<div class="row" style="top:657px"><svg class="ic" width="12" height="15" viewBox="0 0 12 15"><path d="M0.5 0.5H8.5L11.5 3.5V14.5H0.5Z" fill="#fbfbfb" stroke="#807b76" stroke-width="1"/><path d="M8.5 0.5V3.5H11.5" fill="#f4f4f4" stroke="#807b76" stroke-width="1"/><circle cx="5" cy="5.6" r="2.5" fill="#8f9aa6"/><circle cx="5" cy="5.6" r="0.9" fill="#e4e8ec"/><circle cx="7.5" cy="9.4" r="1.8" fill="#5a6169"/><circle cx="7.5" cy="9.4" r="0.7" fill="#ffffff"/></svg><span class="nm" style="letter-spacing:-0.156px">System.ComponentModel.EventBasedAs...</span><span class="dt">31.12.2024 17:40</span><span class="tp">Расширение при...</span><span class="sz">34 КБ</span></div>
<div class="row" style="top:685px"><svg class="ic" width="12" height="15" viewBox="0 0 12 15"><path d="M0.5 0.5H8.5L11.5 3.5V14.5H0.5Z" fill="#fbfbfb" stroke="#807b76" stroke-width="1"/><path d="M8.5 0.5V3.5H11.5" fill="#f4f4f4" stroke="#807b76" stroke-width="1"/><circle cx="5" cy="5.6" r="2.5" fill="#8f9aa6"/><circle cx="5" cy="5.6" r="0.9" fill="#e4e8ec"/><circle cx="7.5" cy="9.4" r="1.8" fill="#5a6169"/><circle cx="7.5" cy="9.4" r="0.7" fill="#ffffff"/></svg><span class="nm" style="letter-spacing:0.057px">System.ComponentModel.Primitives.dll</span><span class="dt">31.12.2024 17:40</span><span class="tp">Расширение при...</span><span class="sz">53 КБ</span></div>
<div class="row" style="top:713px"><svg class="ic" width="12" height="15" viewBox="0 0 12 15"><path d="M0.5 0.5H8.5L11.5 3.5V14.5H0.5Z" fill="#fbfbfb" stroke="#807b76" stroke-width="1"/><path d="M8.5 0.5V3.5H11.5" fill="#f4f4f4" stroke="#807b76" stroke-width="1"/><circle cx="5" cy="5.6" r="2.5" fill="#8f9aa6"/><circle cx="5" cy="5.6" r="0.9" fill="#e4e8ec"/><circle cx="7.5" cy="9.4" r="1.8" fill="#5a6169"/><circle cx="7.5" cy="9.4" r="0.7" fill="#ffffff"/></svg><span class="nm" style="letter-spacing:-0.067px">System.ComponentModel.TypeConverte...</span><span class="dt">31.12.2024 17:40</span><span class="tp">Расширение при...</span><span class="sz">691 КБ</span></div>
<div class="row" style="top:741px"><svg class="ic" width="12" height="15" viewBox="0 0 12 15"><path d="M0.5 0.5H8.5L11.5 3.5V14.5H0.5Z" fill="#fbfbfb" stroke="#807b76" stroke-width="1"/><path d="M8.5 0.5V3.5H11.5" fill="#f4f4f4" stroke="#807b76" stroke-width="1"/><circle cx="5" cy="5.6" r="2.5" fill="#8f9aa6"/><circle cx="5" cy="5.6" r="0.9" fill="#e4e8ec"/><circle cx="7.5" cy="9.4" r="1.8" fill="#5a6169"/><circle cx="7.5" cy="9.4" r="0.7" fill="#ffffff"/></svg><span class="nm" style="letter-spacing:0.119px">System.Composition.AttributedModel.dll</span><span class="dt">31.12.2024 17:40</span><span class="tp">Расширение при...</span><span class="sz">25 КБ</span></div>
<div class="row" style="top:769px"><svg class="ic" width="12" height="15" viewBox="0 0 12 15"><path d="M0.5 0.5H8.5L11.5 3.5V14.5H0.5Z" fill="#fbfbfb" stroke="#807b76" stroke-width="1"/><path d="M8.5 0.5V3.5H11.5" fill="#f4f4f4" stroke="#807b76" stroke-width="1"/><circle cx="5" cy="5.6" r="2.5" fill="#8f9aa6"/><circle cx="5" cy="5.6" r="0.9" fill="#e4e8ec"/><circle cx="7.5" cy="9.4" r="1.8" fill="#5a6169"/><circle cx="7.5" cy="9.4" r="0.7" fill="#ffffff"/></svg><span class="nm" style="letter-spacing:0.078px">System.Composition.Convention.dll</span><span class="dt">31.12.2024 17:40</span><span class="tp">Расширение при...</span><span class="sz">58 КБ</span></div>
<div class="row" style="top:797px"><svg class="ic" width="12" height="15" viewBox="0 0 12 15"><path d="M0.5 0.5H8.5L11.5 3.5V14.5H0.5Z" fill="#fbfbfb" stroke="#807b76" stroke-width="1"/><path d="M8.5 0.5V3.5H11.5" fill="#f4f4f4" stroke="#807b76" stroke-width="1"/><circle cx="5" cy="5.6" r="2.5" fill="#8f9aa6"/><circle cx="5" cy="5.6" r="0.9" fill="#e4e8ec"/><circle cx="7.5" cy="9.4" r="1.8" fill="#5a6169"/><circle cx="7.5" cy="9.4" r="0.7" fill="#ffffff"/></svg><span class="nm" style="letter-spacing:0.103px">System.Composition.Hosting.dll</span><span class="dt">31.12.2024 17:40</span><span class="tp">Расширение при...</span><span class="sz">61 КБ</span></div>
<div class="row" style="top:825px"><svg class="ic" width="12" height="15" viewBox="0 0 12 15"><path d="M0.5 0.5H8.5L11.5 3.5V14.5H0.5Z" fill="#fbfbfb" stroke="#807b76" stroke-width="1"/><path d="M8.5 0.5V3.5H11.5" fill="#f4f4f4" stroke="#807b76" stroke-width="1"/><circle cx="5" cy="5.6" r="2.5" fill="#8f9aa6"/><circle cx="5" cy="5.6" r="0.9" fill="#e4e8ec"/><circle cx="7.5" cy="9.4" r="1.8" fill="#5a6169"/><circle cx="7.5" cy="9.4" r="0.7" fill="#ffffff"/></svg><span class="nm" style="letter-spacing:0.062px">System.Composition.Runtime.dll</span><span class="dt">31.12.2024 17:40</span><span class="tp">Расширение при...</span><span class="sz">30 КБ</span></div>
<div class="row" style="top:853px"><svg class="ic" width="12" height="15" viewBox="0 0 12 15"><path d="M0.5 0.5H8.5L11.5 3.5V14.5H0.5Z" fill="#fbfbfb" stroke="#807b76" stroke-width="1"/><path d="M8.5 0.5V3.5H11.5" fill="#f4f4f4" stroke="#807b76" stroke-width="1"/><circle cx="5" cy="5.6" r="2.5" fill="#8f9aa6"/><circle cx="5" cy="5.6" r="0.9" fill="#e4e8ec"/><circle cx="7.5" cy="9.4" r="1.8" fill="#5a6169"/><circle cx="7.5" cy="9.4" r="0.7" fill="#ffffff"/></svg><span class="nm" style="letter-spacing:-0.078px">System.Composition.TypedParts.dll</span><span class="dt">31.12.2024 17:40</span><span class="tp">Расширение при...</span><span class="sz">64 КБ</span></div>
<div class="row" style="top:881px"><svg class="ic" width="12" height="15" viewBox="0 0 12 15"><path d="M0.5 0.5H8.5L11.5 3.5V14.5H0.5Z" fill="#fbfbfb" stroke="#807b76" stroke-width="1"/><path d="M8.5 0.5V3.5H11.5" fill="#f4f4f4" stroke="#807b76" stroke-width="1"/><circle cx="5" cy="5.6" r="2.5" fill="#8f9aa6"/><circle cx="5" cy="5.6" r="0.9" fill="#e4e8ec"/><circle cx="7.5" cy="9.4" r="1.8" fill="#5a6169"/><circle cx="7.5" cy="9.4" r="0.7" fill="#ffffff"/></svg><span class="nm" style="letter-spacing:0.065px">System.Configuration.dll</span><span class="dt">31.12.2024 17:40</span><span class="tp">Расширение при...</span><span class="sz">19 КБ</span></div>
<div class="row" style="top:909px"><svg class="ic" width="12" height="15" viewBox="0 0 12 15"><path d="M0.5 0.5H8.5L11.5 3.5V14.5H0.5Z" fill="#fbfbfb" stroke="#807b76" stroke-width="1"/><path d="M8.5 0.5V3.5H11.5" fill="#f4f4f4" stroke="#807b76" stroke-width="1"/><circle cx="5" cy="5.6" r="2.5" fill="#8f9aa6"/><circle cx="5" cy="5.6" r="0.9" fill="#e4e8ec"/><circle cx="7.5" cy="9.4" r="1.8" fill="#5a6169"/><circle cx="7.5" cy="9.4" r="0.7" fill="#ffffff"/></svg><span class="nm" style="letter-spacing:-0.129px">System.Console.dll</span><span class="dt">31.12.2024 17:40</span><span class="tp">Расширение при...</span><span class="sz">150 КБ</span></div>
<div class="row" style="top:937px"><svg class="ic" width="12" height="15" viewBox="0 0 12 15"><path d="M0.5 0.5H8.5L11.5 3.5V14.5H0.5Z" fill="#fbfbfb" stroke="#807b76" stroke-width="1"/><path d="M8.5 0.5V3.5H11.5" fill="#f4f4f4" stroke="#807b76" stroke-width="1"/><circle cx="5" cy="5.6" r="2.5" fill="#8f9aa6"/><circle cx="5" cy="5.6" r="0.9" fill="#e4e8ec"/><circle cx="7.5" cy="9.4" r="1.8" fill="#5a6169"/><circle cx="7.5" cy="9.4" r="0.7" fill="#ffffff"/></svg><span class="nm" style="letter-spacing:-0.164px">System.Core.dll</span><span class="dt">31.12.2024 17:40</span><span class="tp">Расширение при...</span><span class="sz">24 КБ</span></div>
<div class="row" style="top:965px"><svg class="ic" width="12" height="15" viewBox="0 0 12 15"><path d="M0.5 0.5H8.5L11.5 3.5V14.5H0.5Z" fill="#fbfbfb" stroke="#807b76" stroke-width="1"/><path d="M8.5 0.5V3.5H11.5" fill="#f4f4f4" stroke="#807b76" stroke-width="1"/><circle cx="5" cy="5.6" r="2.5" fill="#8f9aa6"/><circle cx="5" cy="5.6" r="0.9" fill="#e4e8ec"/><circle cx="7.5" cy="9.4" r="1.8" fill="#5a6169"/><circle cx="7.5" cy="9.4" r="0.7" fill="#ffffff"/></svg><span class="nm">System.Data.Common.dll</span><span class="dt">31.12.2024 17:41</span><span class="tp">Расширение при...</span><span class="sz">2 845 КБ</span></div>

<div id="status" class="a"></div>
<div class="a" style="left:-7px;top:998px;font-size:12px;line-height:14px;color:#e0e0e0;white-space:nowrap;letter-spacing:-0.5px">ом: 15,6 КБ</div>
<div class="a" style="left:61px;top:999px;width:1px;height:10px;background:#b0b0b0"></div>


</body></html>
